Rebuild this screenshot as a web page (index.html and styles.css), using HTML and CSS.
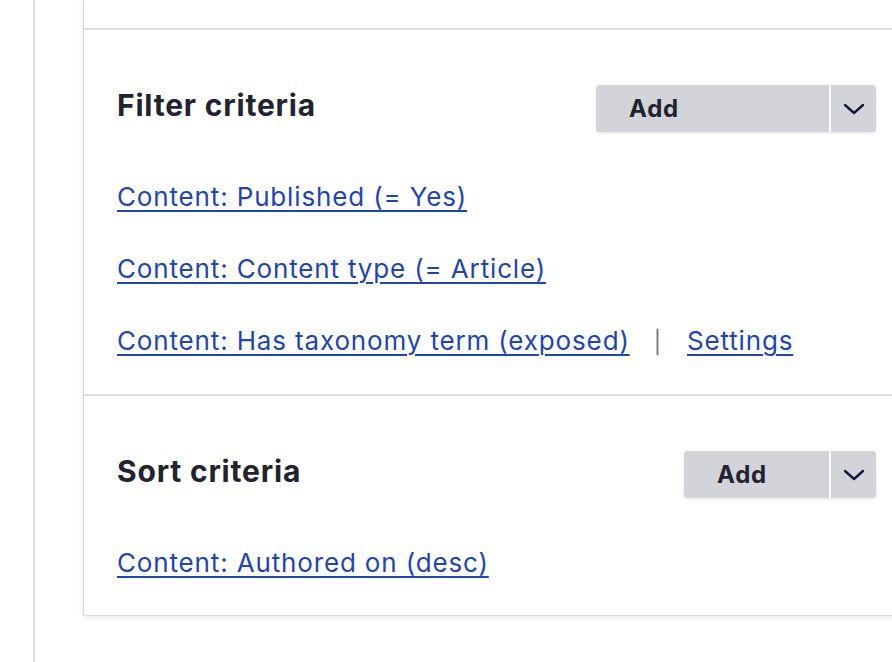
FILE: index.html
```html
<!DOCTYPE html>
<html lang="en">
<head>
    <meta charset="UTF-8">
    <meta name="viewport" content="width=device-width, initial-scale=1.0">
    <title>Views UI - Criteria</title>
    <link rel="stylesheet" href="styles.css">
</head>
<body>

<div class="page">
    <div class="card">
        <div class="section section-top"></div>

        <div class="section">
            <div class="section-header">
                <h2>Filter criteria</h2>
                <div class="dropbutton dropbutton-wide">
                    <button class="dropbutton-action">Add</button>
                    <button class="dropbutton-toggle" aria-label="List additional actions">
                        <svg width="22" height="12" viewBox="0 0 22 12"><path d="M2 2l9 8 9-8" fill="none" stroke="#0f1a3d" stroke-width="2.4" stroke-linecap="round" stroke-linejoin="round"/></svg>
                    </button>
                </div>
            </div>
            <ul class="criteria">
                <li><a href="#">Content: Published (= Yes)</a></li>
                <li><a href="#">Content: Content type (= Article)</a></li>
                <li><a href="#">Content: Has taxonomy term (exposed)</a><span class="sep">|</span><a href="#">Settings</a></li>
            </ul>
        </div>

        <div class="section">
            <div class="section-header">
                <h2>Sort criteria</h2>
                <div class="dropbutton dropbutton-narrow">
                    <button class="dropbutton-action">Add</button>
                    <button class="dropbutton-toggle" aria-label="List additional actions">
                        <svg width="22" height="12" viewBox="0 0 22 12"><path d="M2 2l9 8 9-8" fill="none" stroke="#0f1a3d" stroke-width="2.4" stroke-linecap="round" stroke-linejoin="round"/></svg>
                    </button>
                </div>
            </div>
            <ul class="criteria">
                <li><a href="#">Content: Authored on (desc)</a></li>
            </ul>
        </div>
    </div>
</div>

</body>
</html>
```

FILE: styles.css
```css
html, body {
    margin: 0;
    overflow: hidden;
}
body {
    font-family: Inter, "Noto Sans", Arial, sans-serif;
    color: #222330;
    background-color: #fff;
}
.page {
    margin-left: 33px;
    padding-left: 48px;
    border-left: 2px solid #dedee3;
    min-height: 662px;
}
.card {
    box-sizing: border-box;
    width: 826px;
    background-color: #fff;
    border-left: 1px solid #d4d4d8;
    border-bottom: 1px solid #dcdcdf;
    border-radius: 0 0 2px 2px;
    box-shadow: 0 2px 6px rgba(0, 0, 0, 0.08);
}
.section {
    padding: 55px 33px 36px;
    border-top: 2px solid #dedee1;
}
.section-top {
    height: 28px;
    padding: 0;
    border-top: none;
}
.section-header {
    display: flex;
    justify-content: space-between;
    align-items: center;
    margin-bottom: 49px;
}
.section-header h2 {
    margin: 0;
    padding-bottom: 7px;
    font-size: 30px;
    font-weight: 700;
    letter-spacing: 0.8px;
}
.dropbutton {
    display: flex;
    height: 47px;
    background-color: #d3d4d9;
    border-radius: 4px;
    box-shadow: 0 1px 3px rgba(0, 0, 0, 0.12);
}
.dropbutton-wide {
    width: 280px;
}
.dropbutton-narrow {
    width: 192px;
}
.dropbutton button {
    border: none;
    background: none;
    font-family: inherit;
    color: #222330;
    cursor: pointer;
}
.dropbutton-action {
    flex: 1;
    text-align: left;
    padding: 0 0 0 33px;
    font-size: 24px;
    font-weight: 700;
    letter-spacing: 0.8px;
}
.dropbutton-toggle {
    width: 47px;
    border-left: 2px solid #fff !important;
    display: flex;
    align-items: center;
    justify-content: center;
    padding: 0;
}
.criteria {
    list-style: none;
    margin: 0;
    padding: 0;
    display: flex;
    flex-direction: column;
    gap: 40px;
}
.criteria li {
    font-size: 26px;
    line-height: 32px;
    letter-spacing: 0.85px;
}
.criteria a {
    color: #1e44b6;
    text-decoration: underline;
    text-decoration-thickness: 2px;
    text-underline-offset: 4px;
}
.sep {
    color: #6f6f73;
    margin: 0 25px 0 24px;
    font-size: 22px;
}
```
